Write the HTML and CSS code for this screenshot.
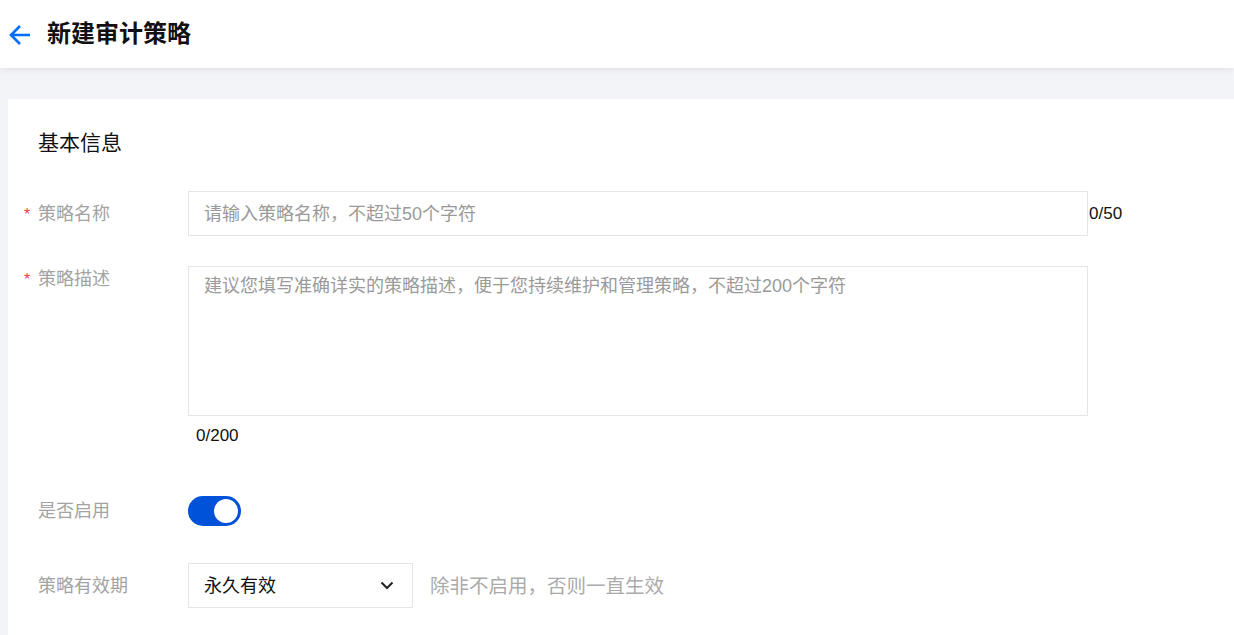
FILE: index.html
```html
<!DOCTYPE html>
<html lang="zh-CN">
<head>
<meta charset="utf-8">
<title>新建审计策略</title>
<link rel="stylesheet" href="styles.css">
</head>
<body>
<header class="topbar">
  <svg class="back" width="24" height="22" viewBox="0 0 24 22" aria-hidden="true">
    <path d="M22 11H3.5M12 2L3 11l9 9" fill="none" stroke="#006eff" stroke-width="2.6" stroke-linecap="butt" stroke-linejoin="miter"/>
  </svg>
  <h1 class="title">新建审计策略</h1>
</header>
<main class="page">
  <section class="card">
    <h2 class="section-title">基本信息</h2>

    <div class="row row-name">
      <label class="label required">策略名称</label>
      <div class="field">
        <div class="input"><span class="placeholder">请输入策略名称，不超过50个字符</span></div>
        <span class="count-inline">0/50</span>
      </div>
    </div>

    <div class="row row-desc">
      <label class="label required label-top">策略描述</label>
      <div class="field-col">
        <div class="textarea"><span class="placeholder">建议您填写准确详实的策略描述，便于您持续维护和管理策略，不超过200个字符</span></div>
        <span class="count-below">0/200</span>
      </div>
    </div>

    <div class="row row-switch">
      <label class="label">是否启用</label>
      <div class="switch"><span class="knob"></span></div>
    </div>

    <div class="row row-select">
      <label class="label">策略有效期</label>
      <div class="select">
        <span class="select-value">永久有效</span>
        <svg class="chevron" width="14" height="9" viewBox="0 0 14 9" aria-hidden="true">
          <path d="M1.5 1.5L7 7l5.5-5.5" fill="none" stroke="#222" stroke-width="2"/>
        </svg>
      </div>
      <span class="hint">除非不启用，否则一直生效</span>
    </div>
  </section>
</main>
</body>
</html>
```

FILE: styles.css
```css
* { box-sizing: border-box; }

html, body {
  margin: 0;
  padding: 0;
  height: 100%;
}

body {
  background: #f3f4f7;
  font-family: "Liberation Sans", "Noto Sans CJK SC", sans-serif;
  color: #000;
  overflow: hidden;
}

.topbar {
  height: 68px;
  background: #fff;
  display: flex;
  align-items: center;
  padding-left: 8px;
  box-shadow: 0 2px 6px rgba(0, 0, 0, 0.07);
  position: relative;
  z-index: 1;
}

.back {
  display: block;
  margin-top: 1px;
}

.title {
  margin: 0 0 0 15px;
  font-size: 24px;
  font-weight: 700;
  color: #111;
  line-height: 32px;
}

.page {
  padding: 31px 0 0 8px;
}

.card {
  background: #fff;
  padding: 30px 0 27px 30px;
}

.section-title {
  margin: 0;
  font-size: 21px;
  font-weight: 400;
  line-height: 28px;
  color: #111;
}

.row {
  display: flex;
  align-items: center;
}

.row-name { margin-top: 34px; }
.row-desc { margin-top: 30px; align-items: flex-start; }
.row-switch { margin-top: 49px; }
.row-select { margin-top: 37px; }

.label {
  width: 150px;
  flex: none;
  font-size: 18px;
  line-height: 24px;
  color: #a3a3a3;
  position: relative;
}

.label-top { margin-top: 1px; }

.required::before {
  content: "*";
  position: absolute;
  left: -14px;
  top: 1px;
  color: #e54545;
  font-size: 16px;
}

.field {
  display: flex;
  align-items: center;
}

.input {
  width: 900px;
  height: 45px;
  border: 1px solid #e3e5ea;
  display: flex;
  align-items: center;
  padding-left: 15px;
}

.placeholder {
  font-size: 18px;
  color: #9a9a9a;
  line-height: 24px;
}

.count-inline {
  font-size: 17px;
  color: #111;
  margin-left: 1px;
}

.field-col {
  display: flex;
  flex-direction: column;
}

.textarea {
  width: 900px;
  height: 150px;
  border: 1px solid #e3e5ea;
  padding: 7px 15px;
}

.count-below {
  margin-top: 9px;
  margin-left: 8px;
  font-size: 17px;
  line-height: 22px;
  color: #111;
}

.switch {
  width: 53px;
  height: 30px;
  border-radius: 15px;
  background: #0052d9;
  position: relative;
}

.knob {
  position: absolute;
  right: 3px;
  top: 3px;
  width: 24px;
  height: 24px;
  border-radius: 50%;
  background: #fff;
}

.select {
  width: 225px;
  height: 45px;
  border: 1px solid #e3e5ea;
  display: flex;
  align-items: center;
  justify-content: space-between;
  padding: 0 18px 0 15px;
}

.select-value {
  font-size: 18px;
  line-height: 24px;
  color: #111;
}

.chevron { display: block; }

.hint {
  margin-left: 17px;
  font-size: 19.5px;
  line-height: 24px;
  color: #ababab;
}
```
